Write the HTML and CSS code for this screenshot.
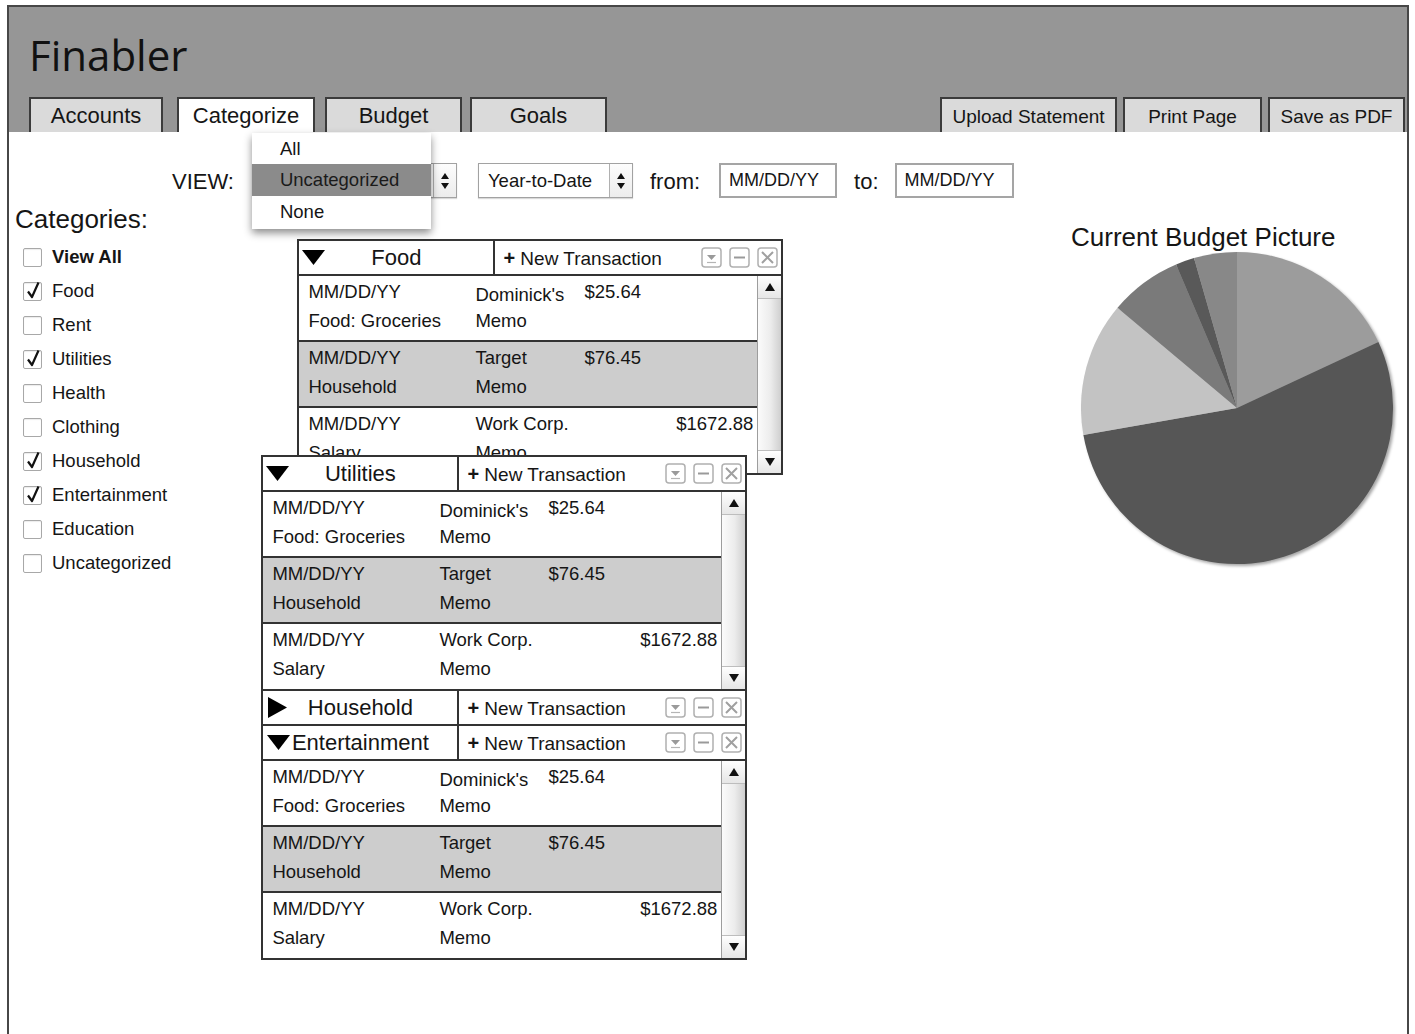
FILE: index.html
```html
<!DOCTYPE html>
<html lang="en">
<head>
<meta charset="utf-8">
<title>Finabler – Categorize</title>
<link rel="stylesheet" href="styles.css">
</head>
<body>
<div class="app">
  <header class="masthead">
    <h1 class="brand">Finabler</h1>
    <nav class="navbar">
      <div class="tabs">
        <a class="tab tab--accounts">Accounts</a>
        <a class="tab tab--categorize tab--active">Categorize</a>
        <a class="tab tab--budget">Budget</a>
        <a class="tab tab--goals">Goals</a>
      </div>
      <div class="actions">
        <button class="action action--upload">Upload Statement</button>
        <button class="action action--print">Print Page</button>
        <button class="action action--pdf">Save as PDF</button>
      </div>
    </nav>
  </header>

  <main class="content">
    <div class="toolbar">
      <span class="toolbar-label">VIEW:</span>
      <div class="select select--view">
        <span class="select-value select-value--open">Uncategorized</span>
        <span class="stepper">
          <svg width="10" height="20" viewBox="0 0 10 20"><polygon points="1,8 9,8 5,2" fill="#111"/><polygon points="1,12 9,12 5,18" fill="#111"/></svg>
        </span>
        <ul class="menu">
          <li>All</li>
          <li class="is-selected">Uncategorized</li>
          <li>None</li>
        </ul>
      </div>
      <div class="select select--range">
        <span class="select-value">Year-to-Date</span>
        <span class="stepper">
          <svg width="10" height="20" viewBox="0 0 10 20"><polygon points="1,8 9,8 5,2" fill="#111"/><polygon points="1,12 9,12 5,18" fill="#111"/></svg>
        </span>
      </div>
      <span class="toolbar-label toolbar-label--gap">from:</span>
      <span class="date-input">MM/DD/YY</span>
      <span class="toolbar-label toolbar-label--gap toolbar-label--to">to:</span>
      <span class="date-input date-input--to">MM/DD/YY</span>
    </div>

    <div class="board">
      <aside class="sidebar">
        <h2 class="sidebar-title">Categories:</h2>
        <ul class="cat-list">
          <li class="cat cat--all"><span class="checkbox"></span>View All</li>
          <li class="cat"><span class="checkbox"><svg class="tick" width="19" height="19" viewBox="0 0 19 19"><path d="M4 10.5 L8 16 L14.5 1.5" fill="none" stroke="#111" stroke-width="2.2" stroke-linejoin="round"/></svg></span>Food</li>
          <li class="cat"><span class="checkbox"></span>Rent</li>
          <li class="cat"><span class="checkbox"><svg class="tick" width="19" height="19" viewBox="0 0 19 19"><path d="M4 10.5 L8 16 L14.5 1.5" fill="none" stroke="#111" stroke-width="2.2" stroke-linejoin="round"/></svg></span>Utilities</li>
          <li class="cat"><span class="checkbox"></span>Health</li>
          <li class="cat"><span class="checkbox"></span>Clothing</li>
          <li class="cat"><span class="checkbox"><svg class="tick" width="19" height="19" viewBox="0 0 19 19"><path d="M4 10.5 L8 16 L14.5 1.5" fill="none" stroke="#111" stroke-width="2.2" stroke-linejoin="round"/></svg></span>Household</li>
          <li class="cat"><span class="checkbox"><svg class="tick" width="19" height="19" viewBox="0 0 19 19"><path d="M4 10.5 L8 16 L14.5 1.5" fill="none" stroke="#111" stroke-width="2.2" stroke-linejoin="round"/></svg></span>Entertainment</li>
          <li class="cat"><span class="checkbox"></span>Education</li>
          <li class="cat"><span class="checkbox"></span>Uncategorized</li>
        </ul>
      </aside>

      <section class="workspace">
        <!-- Food window (sits behind the stacked windows) -->
        <div class="window window--food">
          <div class="pane">
            <div class="pane-head">
              <div class="pane-title-cell">
                <svg class="pane-toggle" width="23" height="15" viewBox="0 0 23 15"><polygon points="0,0 23,0 11.5,15" fill="#000"/></svg>
                <span class="pane-title">Food</span>
              </div>
              <div class="pane-tools">
                <span class="new-tx"><b>+</b> New Transaction</span>
                <span class="win-controls">
                  <svg width="21" height="21" viewBox="0 0 21 21"><rect x="1" y="1" width="19" height="19" rx="3" fill="#fff" stroke="#b0b0b0" stroke-width="1.5"/><polygon points="6,8 15,8 10.5,13" fill="#9a9a9a"/><line x1="6" y1="15.5" x2="15" y2="15.5" stroke="#b5b5b5" stroke-width="1.2"/></svg>
                  <svg width="21" height="21" viewBox="0 0 21 21"><rect x="1" y="1" width="19" height="19" rx="3" fill="#fff" stroke="#b0b0b0" stroke-width="1.5"/><line x1="5" y1="10.5" x2="16" y2="10.5" stroke="#9a9a9a" stroke-width="2"/></svg>
                  <svg width="21" height="21" viewBox="0 0 21 21"><rect x="1" y="1" width="19" height="19" rx="3" fill="#fff" stroke="#b0b0b0" stroke-width="1.5"/><path d="M5 5 L16 16 M16 5 L5 16" stroke="#a0a0a0" stroke-width="2"/></svg>
                </span>
              </div>
            </div>
            <div class="pane-body">
              <div class="tx-list">
                <div class="tx"><span>MM/DD/YY</span><span class="merchant">Dominick's</span><span>$25.64</span><span>Food: Groceries</span><span>Memo</span></div>
                <div class="tx tx--alt"><span>MM/DD/YY</span><span>Target</span><span>$76.45</span><span>Household</span><span>Memo</span></div>
                <div class="tx"><span>MM/DD/YY</span><span>Work Corp.</span><span class="amount--right">$1672.88</span><span>Salary</span><span>Memo</span></div>
              </div>
              <div class="scrollbar">
                <span class="sb-btn sb-btn--up"><svg width="10" height="8" viewBox="0 0 10 8"><polygon points="0,8 10,8 5,0" fill="#111"/></svg></span>
                <span class="sb-track"></span>
                <span class="sb-btn sb-btn--down"><svg width="10" height="8" viewBox="0 0 10 8"><polygon points="0,0 10,0 5,8" fill="#111"/></svg></span>
              </div>
            </div>
          </div>
        </div>

        <!-- Stacked windows: Utilities, Household, Entertainment -->
        <div class="window window--stack">
          <div class="pane">
            <div class="pane-head">
              <div class="pane-title-cell">
                <svg class="pane-toggle" width="23" height="15" viewBox="0 0 23 15"><polygon points="0,0 23,0 11.5,15" fill="#000"/></svg>
                <span class="pane-title">Utilities</span>
              </div>
              <div class="pane-tools">
                <span class="new-tx"><b>+</b> New Transaction</span>
                <span class="win-controls">
                  <svg width="21" height="21" viewBox="0 0 21 21"><rect x="1" y="1" width="19" height="19" rx="3" fill="#fff" stroke="#b0b0b0" stroke-width="1.5"/><polygon points="6,8 15,8 10.5,13" fill="#9a9a9a"/><line x1="6" y1="15.5" x2="15" y2="15.5" stroke="#b5b5b5" stroke-width="1.2"/></svg>
                  <svg width="21" height="21" viewBox="0 0 21 21"><rect x="1" y="1" width="19" height="19" rx="3" fill="#fff" stroke="#b0b0b0" stroke-width="1.5"/><line x1="5" y1="10.5" x2="16" y2="10.5" stroke="#9a9a9a" stroke-width="2"/></svg>
                  <svg width="21" height="21" viewBox="0 0 21 21"><rect x="1" y="1" width="19" height="19" rx="3" fill="#fff" stroke="#b0b0b0" stroke-width="1.5"/><path d="M5 5 L16 16 M16 5 L5 16" stroke="#a0a0a0" stroke-width="2"/></svg>
                </span>
              </div>
            </div>
            <div class="pane-body">
              <div class="tx-list">
                <div class="tx"><span>MM/DD/YY</span><span class="merchant">Dominick's</span><span>$25.64</span><span>Food: Groceries</span><span>Memo</span></div>
                <div class="tx tx--alt"><span>MM/DD/YY</span><span>Target</span><span>$76.45</span><span>Household</span><span>Memo</span></div>
                <div class="tx"><span>MM/DD/YY</span><span>Work Corp.</span><span class="amount--right">$1672.88</span><span>Salary</span><span>Memo</span></div>
              </div>
              <div class="scrollbar">
                <span class="sb-btn sb-btn--up"><svg width="10" height="8" viewBox="0 0 10 8"><polygon points="0,8 10,8 5,0" fill="#111"/></svg></span>
                <span class="sb-track"></span>
                <span class="sb-btn sb-btn--down"><svg width="10" height="8" viewBox="0 0 10 8"><polygon points="0,0 10,0 5,8" fill="#111"/></svg></span>
              </div>
            </div>
          </div>

          <div class="pane">
            <div class="pane-head">
              <div class="pane-title-cell">
                <svg class="pane-toggle pane-toggle--closed" width="19" height="21" viewBox="0 0 19 21"><polygon points="0,0 19,10.5 0,21" fill="#000"/></svg>
                <span class="pane-title">Household</span>
              </div>
              <div class="pane-tools">
                <span class="new-tx"><b>+</b> New Transaction</span>
                <span class="win-controls">
                  <svg width="21" height="21" viewBox="0 0 21 21"><rect x="1" y="1" width="19" height="19" rx="3" fill="#fff" stroke="#b0b0b0" stroke-width="1.5"/><polygon points="6,8 15,8 10.5,13" fill="#9a9a9a"/><line x1="6" y1="15.5" x2="15" y2="15.5" stroke="#b5b5b5" stroke-width="1.2"/></svg>
                  <svg width="21" height="21" viewBox="0 0 21 21"><rect x="1" y="1" width="19" height="19" rx="3" fill="#fff" stroke="#b0b0b0" stroke-width="1.5"/><line x1="5" y1="10.5" x2="16" y2="10.5" stroke="#9a9a9a" stroke-width="2"/></svg>
                  <svg width="21" height="21" viewBox="0 0 21 21"><rect x="1" y="1" width="19" height="19" rx="3" fill="#fff" stroke="#b0b0b0" stroke-width="1.5"/><path d="M5 5 L16 16 M16 5 L5 16" stroke="#a0a0a0" stroke-width="2"/></svg>
                </span>
              </div>
            </div>
          </div>

          <div class="pane">
            <div class="pane-head">
              <div class="pane-title-cell">
                <svg class="pane-toggle pane-toggle--tight" width="23" height="15" viewBox="0 0 23 15"><polygon points="0,0 23,0 11.5,15" fill="#000"/></svg>
                <span class="pane-title">Entertainment</span>
              </div>
              <div class="pane-tools">
                <span class="new-tx"><b>+</b> New Transaction</span>
                <span class="win-controls">
                  <svg width="21" height="21" viewBox="0 0 21 21"><rect x="1" y="1" width="19" height="19" rx="3" fill="#fff" stroke="#b0b0b0" stroke-width="1.5"/><polygon points="6,8 15,8 10.5,13" fill="#9a9a9a"/><line x1="6" y1="15.5" x2="15" y2="15.5" stroke="#b5b5b5" stroke-width="1.2"/></svg>
                  <svg width="21" height="21" viewBox="0 0 21 21"><rect x="1" y="1" width="19" height="19" rx="3" fill="#fff" stroke="#b0b0b0" stroke-width="1.5"/><line x1="5" y1="10.5" x2="16" y2="10.5" stroke="#9a9a9a" stroke-width="2"/></svg>
                  <svg width="21" height="21" viewBox="0 0 21 21"><rect x="1" y="1" width="19" height="19" rx="3" fill="#fff" stroke="#b0b0b0" stroke-width="1.5"/><path d="M5 5 L16 16 M16 5 L5 16" stroke="#a0a0a0" stroke-width="2"/></svg>
                </span>
              </div>
            </div>
            <div class="pane-body">
              <div class="tx-list">
                <div class="tx"><span>MM/DD/YY</span><span class="merchant">Dominick's</span><span>$25.64</span><span>Food: Groceries</span><span>Memo</span></div>
                <div class="tx tx--alt"><span>MM/DD/YY</span><span>Target</span><span>$76.45</span><span>Household</span><span>Memo</span></div>
                <div class="tx"><span>MM/DD/YY</span><span>Work Corp.</span><span class="amount--right">$1672.88</span><span>Salary</span><span>Memo</span></div>
              </div>
              <div class="scrollbar">
                <span class="sb-btn sb-btn--up"><svg width="10" height="8" viewBox="0 0 10 8"><polygon points="0,8 10,8 5,0" fill="#111"/></svg></span>
                <span class="sb-track"></span>
                <span class="sb-btn sb-btn--down"><svg width="10" height="8" viewBox="0 0 10 8"><polygon points="0,0 10,0 5,8" fill="#111"/></svg></span>
              </div>
            </div>
          </div>
        </div>
      </section>

      <section class="chart">
        <h2 class="chart-title">Current Budget Picture</h2>
        <svg class="pie" width="330" height="325" viewBox="0 0 330 325">
          <path d="M160 156 L160 0 A156 156 0 0 1 301.4 90.1 Z" fill="#9c9c9c"/>
          <path d="M160 156 L301.4 90.1 A156 156 0 1 1 6.4 183.1 Z" fill="#565656"/>
          <path d="M160 156 L6.4 183.1 A156 156 0 0 1 40.5 55.7 Z" fill="#c3c3c3"/>
          <path d="M160 156 L40.5 55.7 A156 156 0 0 1 99.1 12.4 Z" fill="#7a7a7a"/>
          <path d="M160 156 L99.1 12.4 A156 156 0 0 1 117 6 Z" fill="#595959"/>
          <path d="M160 156 L117 6 A156 156 0 0 1 160 0 Z" fill="#888888"/>
        </svg>
      </section>
    </div>
  </main>
</div>
</body>
</html>
```

FILE: styles.css
```css
* {
  box-sizing: border-box;
}

html,
body {
  margin: 0;
  overflow: hidden;
  background: #fff;
}

body {
  font-family: "Liberation Sans", Arial, sans-serif;
  color: #151515;
}

/* ---------- outer frame ---------- */
.app {
  margin: 5px 0 0 7px;
  width: 1402px;
  height: 1029px;
  border: 2px solid #474747;
  border-bottom: 0;
  display: flex;
  flex-direction: column;
}

/* ---------- masthead ---------- */
.masthead {
  background: #969696;
  height: 125px;
  padding: 24px 2px 0 20px;
  display: flex;
  flex-direction: column;
}

.brand {
  margin: 0;
  font: 400 42px/48px "Open Sans", "DejaVu Sans", sans-serif;
  color: #111;
}

.navbar {
  margin-top: auto;
  margin-left: -2px;
  display: flex;
  justify-content: space-between;
  align-items: flex-end;
}

.tabs {
  display: flex;
  padding-left: 2px;
}

.tab,
.action {
  height: 35px;
  border: 2px solid #3b3b3b;
  border-bottom: 0;
  background: #dadada;
  color: #151515;
  display: flex;
  align-items: center;
  justify-content: center;
  font-family: "Liberation Sans", Arial, sans-serif;
  padding: 0;
}

.tab {
  font-size: 22px;
  padding-top: 1px;
}

.tab--accounts { width: 134px; }
.tab--categorize { width: 138px; margin-left: 14px; }
.tab--budget { width: 137px; margin-left: 10px; }
.tab--goals { width: 137px; margin-left: 8px; }

.tab--active {
  background: #fff;
}

.actions {
  display: flex;
  gap: 6px;
}

.action {
  font-size: 19px;
  padding-top: 2px;
}

.action--upload { width: 177px; }
.action--print { width: 139px; }
.action--pdf { width: 137px; }

/* ---------- content ---------- */
.content {
  flex: 1;
  display: flex;
  flex-direction: column;
  min-height: 0;
}

.toolbar {
  display: flex;
  align-items: center;
  height: 35px;
  margin: 31px 0 6px 163px;
}

.toolbar-label {
  font-size: 22px;
  margin-right: 18px;
  padding-top: 2px;
}

.toolbar-label--gap {
  margin: 0 19px 0 17px;
}

.toolbar-label--to {
  margin-right: 16px;
}

.select {
  position: relative;
  display: flex;
  height: 35px;
  border: 1px solid #a2a2a2;
  background: #fff;
  box-shadow: 0 1px 1px rgba(0, 0, 0, 0.15);
}

.select--view { width: 205px; }

.select--range {
  width: 155px;
  margin-left: 21px;
}

.select-value {
  flex: 1;
  padding-left: 9px;
  font-size: 18.5px;
  line-height: 33px;
}

/* the open list covers the current value */
.select-value--open {
  visibility: hidden;
}

.stepper {
  width: 23px;
  border-left: 1px solid #b0b0b0;
  display: flex;
  align-items: center;
  justify-content: center;
  background: linear-gradient(#fdfdfd, #ececec);
}

.menu {
  position: absolute;
  left: -1px;
  top: -31px;
  width: 179px;
  margin: 0;
  padding: 0 0 2px;
  list-style: none;
  background: #fff;
  box-shadow: 0 4px 8px rgba(0, 0, 0, 0.45);
  font-size: 18.5px;
  z-index: 5;
}

.menu li {
  height: 31px;
  line-height: 31px;
  padding-left: 28px;
}

.menu li.is-selected {
  height: 32px;
  line-height: 32px;
  background: #8b8b8b;
  color: #1a1a1a;
}

.date-input {
  width: 118px;
  height: 35px;
  border: 2px solid #a5a5a5;
  padding-left: 8px;
  font-size: 18px;
  line-height: 31px;
}

.date-input--to {
  width: 119px;
}

/* ---------- board ---------- */
.board {
  flex: 1;
  display: flex;
  min-height: 0;
}

.sidebar {
  width: 252px;
  padding-left: 6px;
}

.sidebar-title {
  margin: 0;
  font-size: 26px;
  line-height: 30px;
  font-weight: 400;
}

.cat-list {
  list-style: none;
  margin: 6px 0 0;
  padding: 0 0 0 8px;
}

.cat {
  height: 34px;
  display: flex;
  align-items: center;
  gap: 10px;
  font-size: 18.5px;
}

.cat--all {
  font-weight: 700;
}

.checkbox {
  position: relative;
  width: 19px;
  height: 19px;
  border: 1px solid #a8a8a8;
  border-radius: 2px;
  background: #fff;
  box-shadow: inset 0 1px 1px rgba(0, 0, 0, 0.08);
}

.tick {
  position: absolute;
  left: 0;
  top: -2px;
  overflow: visible;
}

/* ---------- windows ---------- */
.workspace {
  position: relative;
  width: 809px;
}

.window {
  position: absolute;
  width: 486px;
  border: 2px solid #333;
  background: #fff;
}

.window--food {
  left: 38px;
  top: 35px;
}

.window--stack {
  left: 2px;
  top: 251px;
  z-index: 2;
}

.pane + .pane {
  border-top: 2px solid #333;
}

.pane-head {
  display: flex;
  height: 33px;
}

.pane-title-cell {
  width: 196px;
  border-right: 2px solid #333;
  display: grid;
  align-items: center;
}

.pane-title-cell > * {
  grid-area: 1 / 1;
}

.pane-toggle {
  justify-self: start;
  margin-left: 3px;
}

.pane-toggle--closed {
  margin-left: 5px;
}

.pane-toggle--tight {
  margin-left: 4px;
}

.pane-title {
  justify-self: center;
  font-size: 22px;
  padding-top: 1px;
}

.pane-tools {
  flex: 1;
  display: flex;
  align-items: center;
  padding: 0 3px 0 8px;
}

.new-tx {
  flex: 1;
  font-size: 19px;
  padding-top: 2px;
}

.new-tx b {
  font-size: 20px;
}

.win-controls {
  display: flex;
  gap: 7px;
}

.win-controls svg {
  display: block;
}

.pane-body {
  display: flex;
  height: 199px;
  border-top: 2px solid #333;
}

.tx-list {
  flex: 1;
  display: flex;
  flex-direction: column;
}

.tx {
  height: 66px;
  border-bottom: 2px solid #333;
  display: grid;
  grid-template-columns: 167px 109px 1fr;
  grid-template-rows: 29px 29px;
  padding: 1px 4px 0 9px;
  font-size: 18.5px;
  line-height: 29px;
}

.tx:last-child {
  flex: 1;
  border-bottom: 0;
}

.tx--alt {
  background: #cdcdcd;
}

.merchant {
  padding-top: 3px;
}

.amount--right {
  justify-self: end;
}

.scrollbar {
  width: 24px;
  border-left: 1px solid #9d9d9d;
  display: flex;
  flex-direction: column;
}

.sb-btn {
  height: 23px;
  display: flex;
  align-items: center;
  justify-content: center;
  background: linear-gradient(#fefefe, #e6e6e6);
}

.sb-btn--up {
  border-bottom: 1px solid #bdbdbd;
}

.sb-btn--down {
  border-top: 1px solid #bdbdbd;
}

.sb-track {
  flex: 1;
  background: linear-gradient(90deg, #fbfbfb 0%, #ececec 55%, #cfcfcf 100%);
}

/* ---------- chart ---------- */
.chart {
  flex: 1;
  padding-left: 8px;
}

.chart-title {
  margin: 18px 0 0;
  font-size: 26px;
  line-height: 30px;
  font-weight: 400;
}

.pie {
  display: block;
  margin-left: 6px;
  filter: drop-shadow(2px 2px 1.5px rgba(0, 0, 0, 0.35));
}
```
